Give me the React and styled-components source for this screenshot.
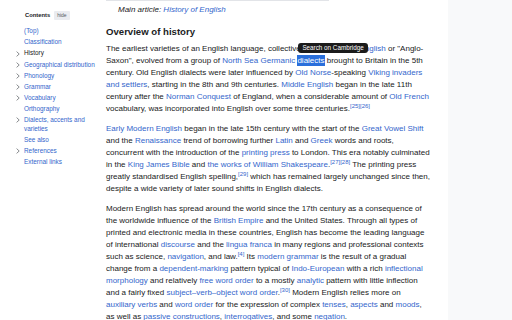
import { styled, createGlobalStyle } from 'styled-components';

const Global = createGlobalStyle`
html, body {
	margin: 0;
	padding: 0;
	background: #fff;
}
body {
	font-family: 'Liberation Sans', Arial, sans-serif;
	color: #202122;
}
`;

const Page = styled.div`
width: 512px;
height: 320px;
overflow: hidden;
display: grid;
grid-template-columns: 100px 348px 1fr;
`;

const Sidebar = styled.nav`
padding: 10px 0 0 16px;
font-size: 6.4px;
`;

const TocHeader = styled.div`
display: flex;
align-items: center;
gap: 4px;
height: 10px;
padding-left: 9px;
margin-bottom: 6px;
`;

const TocTitle = styled.span`
font-size: 5.8px;
font-weight: 700;
`;

const HideButton = styled.span`
background: #eaecf0;
font-size: 5px;
line-height: 9px;
padding: 0 3px;
border-radius: 1px;
color: #54595d;
`;

const TocList = styled.ul`
list-style: none;
margin: 0;
padding: 0;
`;

const TocItem = styled.li`
display: flex;
align-items: flex-start;
padding: 1.3px 0;
line-height: 8.5px;
`;

const Chevron = styled.span`
width: 8px;
flex: none;
display: flex;
align-items: center;
height: 8.5px;
`;

const TocLink = styled.a`
color: ${props => props.current ? '#202122' : '#36c'};
width: 73px;
`;

const Main = styled.main`
padding: 0 16px 0 6px;
font-size: 8px;
line-height: 12px;
`;

const TopRule = styled.div`
width: 223px;
height: 1px;
background: #e2e4e8;
`;

const Hatnote = styled.div`
margin-top: 3px;
padding-left: 12px;
font-style: italic;
`;

const Heading = styled.h3`
margin: 9px 0 0;
font-size: 9.6px;
line-height: 14px;
font-weight: 700;
`;

const Para = styled.p`
margin: ${props => props.first ? '4px' : '8px'} 0 0;
width: 326px;
`;

const A = styled.a`
color: #36c;
text-decoration: none;
`;

const Ref = styled.sup`
color: #36c;
font-size: 6px;
line-height: 0;
vertical-align: 3px;
`;

const Selected = styled.span`
position: relative;
background: #2a6fdb;
color: #fff;
padding: 1px 0;
`;

const Tooltip = styled.span`
position: absolute;
left: 1px;
bottom: 13px;
background: #1b1b1b;
color: #fff;
font-size: 6.3px;
line-height: 10px;
padding: 0 4px;
border-radius: 3px;
white-space: nowrap;
`;

const Aside = styled.aside`
background: #f8f9fa;
`;

const toc = [
	{ label: '(Top)' },
	{ label: 'Classification' },
	{ label: 'History', sub: true, current: true },
	{ label: 'Geographical distribution', sub: true },
	{ label: 'Phonology', sub: true },
	{ label: 'Grammar', sub: true },
	{ label: 'Vocabulary', sub: true },
	{ label: 'Orthography' },
	{ label: 'Dialects, accents and varieties', sub: true },
	{ label: 'See also' },
	{ label: 'References', sub: true },
	{ label: 'External links' },
];

const ChevronIcon = () => (
	<svg width="4" height="6" viewBox="0 0 4 6">
		<path d="M0.6 0.6 L3.2 3 L0.6 5.4" fill="none" stroke="#54595d" strokeWidth="0.7" />
	</svg>
);

const App = () => {
	return (
		<Page>
			<Global />
			<Sidebar>
				<TocHeader>
					<TocTitle>Contents</TocTitle>
					<HideButton>hide</HideButton>
				</TocHeader>
				<TocList>
					{toc.map(item => (
						<TocItem key={item.label}>
							<Chevron>{item.sub && <ChevronIcon />}</Chevron>
							<TocLink current={item.current}>{item.label}</TocLink>
						</TocItem>
					))}
				</TocList>
			</Sidebar>
			<Main>
				<TopRule />
				<Hatnote>Main article: <A>History of English</A></Hatnote>
				<Heading>Overview of history</Heading>
				<Para first>
					The earliest varieties of an English language, collectively known as <A>Old English</A> or "Anglo-Saxon", evolved from a group of <A>North Sea Germanic</A> <Selected><Tooltip>Search on Cambridge</Tooltip>dialects</Selected> brought to Britain in the 5th century. Old English dialects were later influenced by <A>Old Norse</A>-speaking <A>Viking invaders and settlers</A>, starting in the 8th and 9th centuries. <A>Middle English</A> began in the late 11th century after the <A>Norman Conquest</A> of England, when a considerable amount of <A>Old French</A> vocabulary, was incorporated into English over some three centuries.<Ref>[25][26]</Ref>
				</Para>
				<Para>
					<A>Early Modern English</A> began in the late 15th century with the start of the <A>Great Vowel Shift</A> and the <A>Renaissance</A> trend of borrowing further <A>Latin</A> and <A>Greek</A> words and roots, concurrent with the introduction of the <A>printing press</A> to London. This era notably culminated in the <A>King James Bible</A> and <A>the works of William Shakespeare</A>.<Ref>[27][28]</Ref> The printing press greatly standardised English spelling,<Ref>[29]</Ref> which has remained largely unchanged since then, despite a wide variety of later sound shifts in English dialects.
				</Para>
				<Para>
					Modern English has spread around the world since the 17th century as a consequence of the worldwide influence of the <A>British Empire</A> and the United States. Through all types of printed and electronic media in these countries, English has become the leading language of international <A>discourse</A> and the <A>lingua franca</A> in many regions and professional contexts such as science, <A>navigation</A>, and law.<Ref>[4]</Ref> Its <A>modern grammar</A> is the result of a gradual change from a <A>dependent-marking</A> pattern typical of <A>Indo-European</A> with a rich <A>inflectional morphology</A> and relatively <A>free word order</A> to a mostly <A>analytic</A> pattern with little inflection and a fairly fixed <A>subject–verb–object word order</A>.<Ref>[30]</Ref> Modern English relies more on <A>auxiliary verbs</A> and <A>word order</A> for the expression of complex <A>tenses</A>, <A>aspects</A> and <A>moods</A>, as well as <A>passive constructions</A>, <A>interrogatives</A>, and some <A>negation</A>.
				</Para>
			</Main>
			<Aside />
		</Page>
	);
};

export default App;
